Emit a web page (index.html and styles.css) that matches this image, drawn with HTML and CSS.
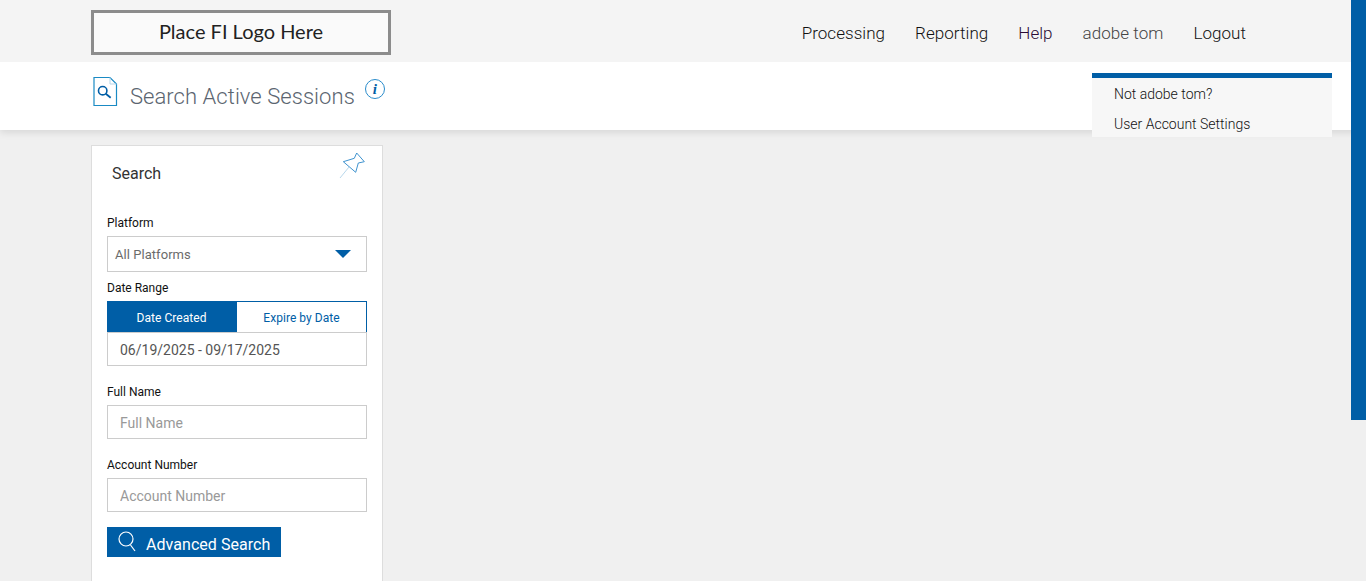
FILE: index.html
```html
<!DOCTYPE html>
<html lang="en">
  <head>
    <meta charset="UTF-8" />
    <meta name="viewport" content="width=device-width, initial-scale=1.0" />
    <title>Search Active Sessions</title>
    <link rel="stylesheet" href="styles.css">
  </head>
  <body>
    <header class="topbar">
      <div class="logo">Place FI Logo Here</div>
      <nav class="nav">
        <a href="#">Processing</a>
        <a href="#">Reporting</a>
        <a href="#" class="nav-help">Help</a>
        <a href="#" class="nav-user">adobe tom</a>
        <a href="#">Logout</a>
      </nav>
    </header>

    <div class="titlebar">
      <svg class="doc-icon" width="26" height="31" viewBox="0 0 26 31" fill="none">
        <path d="M2 1.500H18L24.500 8V29.500H2Z" stroke="#1a8ac4" stroke-width="1.200" />
        <path d="M18 1.500V8H24.500" stroke="#b5d6ea" stroke-width="1" />
        <circle cx="10.700" cy="14.700" r="4.200" stroke="#005ea6" stroke-width="1.600" />
        <path d="M13.800 17.800L18.700 21.700" stroke="#005ea6" stroke-width="1.800" />
      </svg>
      <h1>Search Active Sessions</h1>
      <span class="info">i</span>
    </div>

    <div class="user-menu">
      <a href="#">Not adobe tom?</a>
      <a href="#">User Account Settings</a>
    </div>

    <div class="side-strip"></div>

    <main class="content">
      <form class="panel">
        <div class="panel-head">
          <h2>Search</h2>
          <svg class="pin" width="26" height="27" viewBox="0 0 26 27" fill="none">
            <path d="M4.300 9.700L15.300 6.300L17.700 1L25.300 9.700L19.300 11L16.700 20.300Z" stroke="#3f93cf" stroke-width="1" />
            <path d="M10 15L1 26" stroke="#b9d8ec" stroke-width="1" />
          </svg>
        </div>

        <label class="label">Platform</label>
        <div class="select">
          <span>All Platforms</span>
          <i class="caret"></i>
        </div>

        <label class="label label-date">Date Range</label>
        <div class="toggle">
          <button type="button" class="toggle-on">Date Created</button>
          <button type="button">Expire by Date</button>
        </div>
        <input class="input" type="text" value="06/19/2025 - 09/17/2025" />

        <label class="label label-gap">Full Name</label>
        <input class="input" type="text" placeholder="Full Name" />

        <label class="label label-gap">Account Number</label>
        <input class="input" type="text" placeholder="Account Number" />

        <button type="button" class="advanced">
          <svg width="20" height="24" viewBox="0 0 20 24" fill="none">
            <circle cx="8" cy="9" r="7" stroke="#fff" stroke-width="1.200" />
            <path d="M12.500 15L17 21" stroke="#fff" stroke-width="1.200" />
          </svg>
          <span class="advanced-text">Advanced Search</span>
        </button>
      </form>
    </main>
  </body>
</html>
```

FILE: styles.css
```css
html,
body {
  height: 581px;
  overflow: hidden;
}
body {
  margin: 0;
  background-color: #f0f0f0;
  font-family: Roboto, "Liberation Sans", sans-serif;
  color: #222;
}
.topbar {
  position: relative;
  z-index: 1;
  height: 62px;
  background-color: #f4f4f4;
  display: flex;
  align-items: flex-start;
  justify-content: space-between;
  padding: 10px 120px 0 91px;
  box-sizing: border-box;
}
.logo {
  width: 300px;
  height: 45px;
  box-sizing: border-box;
  border: 3px solid #8c8c8c;
  background-color: #fafafa;
  display: flex;
  align-items: center;
  justify-content: center;
  padding-bottom: 3px;
  font-family: Lato, sans-serif;
  font-size: 20px;
  color: #222;
}
.nav {
  display: flex;
  gap: 30px;
  padding-top: 13px;
  font-size: 17px;
  font-weight: 300;
  letter-spacing: 0.05px;
}
.nav a {
  color: #111;
  text-decoration: none;
}
.nav .nav-help {
  color: #2a0a35;
}
.nav .nav-user {
  color: #444;
}
.titlebar {
  height: 68px;
  background-color: #fff;
  box-shadow: 0 2px 8px rgba(0, 0, 0, 0.12);
  display: flex;
  align-items: flex-start;
  padding-left: 92px;
  box-sizing: border-box;
}
.doc-icon {
  margin-top: 14px;
}
.titlebar h1 {
  margin: 20px 0 0 12px;
  font-size: 22px;
  line-height: 30px;
  font-weight: 300;
  letter-spacing: 0.05px;
  color: #5b6570;
}
.info {
  width: 18px;
  height: 18px;
  margin: 17px 0 0 10px;
  border: 1px solid #2a8ccb;
  border-radius: 50%;
  text-align: center;
  font-family: "Liberation Serif", serif;
  font-style: italic;
  font-weight: bold;
  font-size: 15px;
  line-height: 18px;
  color: #005ea6;
}
.user-menu {
  position: absolute;
  z-index: 2;
  top: 73px;
  left: 1092px;
  width: 240px;
  height: 64px;
  box-sizing: border-box;
  border-top: 5px solid #005ea6;
  background-color: #f7f7f7;
  padding: 1px 0 0 22px;
  font-size: 14px;
  font-weight: 300;
}
.user-menu a {
  display: block;
  height: 30px;
  line-height: 30px;
  color: #111;
  text-decoration: none;
}
.side-strip {
  position: absolute;
  z-index: 2;
  top: 0;
  right: 0;
  width: 15px;
  height: 420px;
  background-color: #005ea6;
}
.content {
  padding: 15px 0 0 91px;
}
.panel {
  width: 292px;
  height: 436px;
  overflow: hidden;
  box-sizing: border-box;
  background-color: #fff;
  border: 1px solid #ddd;
  border-bottom: none;
  padding: 0 15px;
  display: flex;
  flex-direction: column;
  align-items: flex-start;
}
.panel-head {
  width: 100%;
  height: 65px;
  flex: none;
  position: relative;
}
.panel-head h2 {
  margin: 18px 0 0 5px;
  font-size: 16px;
  line-height: 19px;
  font-weight: 400;
  color: #333;
}
.pin {
  position: absolute;
  top: 6px;
  right: 2px;
}
.label {
  font-size: 12px;
  line-height: 16px;
  height: 16px;
  flex: none;
  color: #111;
  margin-top: 4px;
  margin-bottom: 5px;
}
.label-date {
  margin-top: 8px;
  margin-bottom: 5px;
}
.label-gap {
  margin-top: 18px;
}
.select {
  width: 260px;
  height: 36px;
  flex: none;
  box-sizing: border-box;
  border: 1px solid #ccc;
  display: flex;
  align-items: center;
  justify-content: space-between;
  padding: 0 15px 0 7px;
  font-size: 13px;
  letter-spacing: 0.05px;
  color: #6b6b6b;
}
.caret {
  width: 0;
  height: 0;
  border-left: 8px solid transparent;
  border-right: 8px solid transparent;
  border-top: 8px solid #005ea6;
}
.toggle {
  width: 260px;
  height: 31px;
  flex: none;
  display: flex;
}
.toggle button {
  flex: 1;
  box-sizing: border-box;
  background-color: #fff;
  border: 1px solid #005ea6;
  border-bottom: none;
  border-left: none;
  font-family: inherit;
  font-size: 12px;
  letter-spacing: 0.05px;
  color: #005ea6;
  padding: 2px 0 0;
}
.toggle .toggle-on {
  background-color: #005ea6;
  color: #fff;
}
.input {
  width: 260px;
  height: 34px;
  flex: none;
  box-sizing: border-box;
  border: 1px solid #ccc;
  padding: 2px 12px 0;
  font-family: inherit;
  font-size: 14px;
  color: #555;
  background-color: #fff;
  outline: none;
}
.input::placeholder {
  color: #999;
}
.advanced {
  margin-top: 15px;
  width: 174px;
  height: 30px;
  flex: none;
  box-sizing: border-box;
  background-color: #005ea6;
  border: none;
  color: #fff;
  font-family: inherit;
  font-size: 16px;
  display: flex;
  align-items: center;
  gap: 8px;
  padding: 0 0 0 11px;
}
.advanced-text {
  margin-top: 4px;
  letter-spacing: 0.05px;
}
```
